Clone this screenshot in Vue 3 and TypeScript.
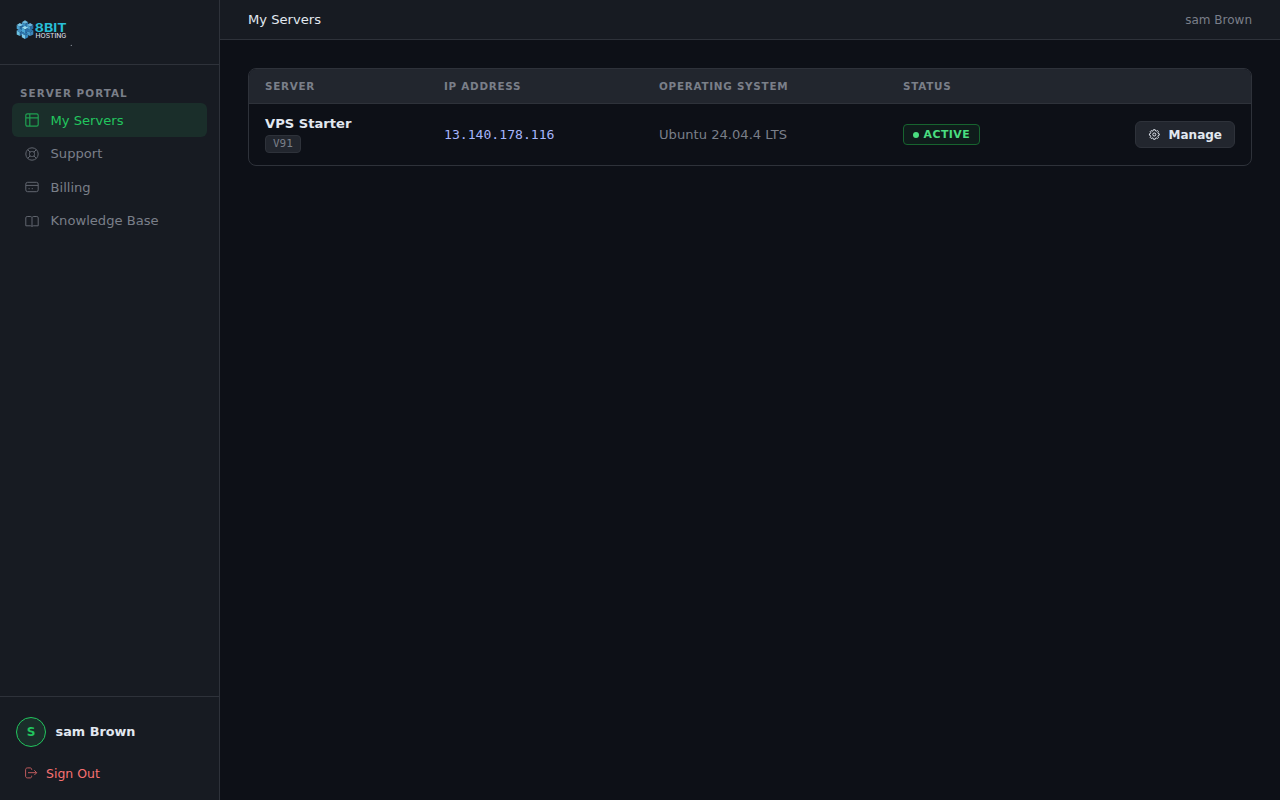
<script setup lang="ts">
import { ref } from 'vue'

interface NavItem { label: string; icon: string }
interface Server { name: string; tag: string; ip: string; os: string; status: string }
interface Cube { x: number; y: number; top: string; left: string; right: string }

const nav: NavItem[] = [
  { label: 'My Servers', icon: 'grid' },
  { label: 'Support', icon: 'ring' },
  { label: 'Billing', icon: 'card' },
  { label: 'Knowledge Base', icon: 'book' },
]
const active = ref('My Servers')
const user = 'sam Brown'
const servers: Server[] = [
  { name: 'VPS Starter', tag: 'V91', ip: '13.140.178.116', os: 'Ubuntu 24.04.4 LTS', status: 'ACTIVE' },
]
const cubes: Cube[] = [
  { x: 9, y: 4, top: '#6db9dc', left: '#3c8fc2', right: '#2b72a8' },
  { x: 3.9, y: 6.8, top: '#7cc8e8', left: '#4ba2d0', right: '#22639a' },
  { x: 14.1, y: 6.8, top: '#6ab4dc', left: '#4a9cca', right: '#2c70a6' },
  { x: 3.9, y: 12.4, top: '#3f8fc2', left: '#6cc4e4', right: '#2a6ca2' },
  { x: 14.1, y: 12.4, top: '#2f78ae', left: '#4a9ccc', right: '#3a86ba' },
  { x: 9, y: 15.2, top: '#2f78ae', left: '#7ccaea', right: '#3584b8' },
  { x: 9, y: 9.6, top: '#9adcf0', left: '#4aa6d4', right: '#2a6fa8' },
]
</script>

<template>
  <div class="layout">
    <aside class="sidebar">
      <div class="brand">
        <svg class="logo" width="60" height="36" viewBox="0 0 60 36">
          <g v-for="(c, i) in cubes" :key="i" :transform="`translate(${c.x} ${c.y})`">
            <path d="M0-3.700 3.200-1.800 0 0-3.200-1.800Z" :fill="c.top" />
            <path d="M-3.200-1.800 0 0V3.700L-3.200 2Z" :fill="c.left" />
            <path d="M3.200-1.800 0 0V3.700L3.200 2Z" :fill="c.right" />
          </g>
          <text x="18.800" y="11.600" class="logo-main" textLength="31.700" lengthAdjust="spacingAndGlyphs">8BIT</text>
          <text x="19.600" y="18.100" class="logo-sub" textLength="30.800" lengthAdjust="spacingAndGlyphs">HOSTING</text>
          <circle cx="55.300" cy="25.400" r=".6" fill="#8d949d" />
        </svg>
      </div>
      <nav class="nav">
        <div class="nav-title">SERVER PORTAL</div>
        <a v-for="n in nav" :key="n.label" class="nav-item" :class="{ active: active === n.label }" @click="active = n.label">
          <svg width="16" height="16" viewBox="0 0 16 16" fill="none" stroke="currentColor">
            <g v-if="n.icon === 'grid'" stroke-width="1.200">
              <rect x="1.800" y="1.800" width="12.400" height="12.400" rx="1.600" />
              <path d="M2 5.800h12M5.800 2v12" />
            </g>
            <g v-else-if="n.icon === 'ring'">
              <circle cx="8" cy="8" r="6.200" />
              <rect x="5.500" y="5.500" width="5" height="5" rx="2" />
              <path d="m3.700 3.700 2.300 2.300m4 4 2.300 2.300m0-8.600L10 6M6 10l-2.300 2.300" />
            </g>
            <g v-else-if="n.icon === 'card'">
              <rect x="1.800" y="3.300" width="12.400" height="9.400" rx="1.800" />
              <path d="M2 6.400h12M4.500 9.700h1.200M7.700 9.700h1.200" />
            </g>
            <path v-else d="M8 4.500C7.700 3.700 7 3.500 6.200 3.500H3.200c-.9 0-1.400.5-1.400 1.300v8h4.800c.7 0 1.200.1 1.400.7.200-.6.700-.7 1.400-.7h4.800v-8c0-.8-.5-1.300-1.400-1.300h-3c-.8 0-1.500.2-1.800 1Zm0 0v9" />
          </svg>
          <span>{{ n.label }}</span>
        </a>
      </nav>
      <div class="account">
        <div class="profile">
          <div class="avatar">S</div>
          <span>{{ user }}</span>
        </div>
        <a class="signout">
          <svg width="14" height="14" viewBox="0 0 14 14" fill="none" stroke="currentColor">
            <path d="M7.700 4V3.600C7.700 2.400 7 1.900 6 1.900H3.500C2.300 1.900 1.600 2.600 1.600 3.700v6.400c0 1.100.7 1.800 1.900 1.800H6c1 0 1.700-.5 1.700-1.700v-.5M4 6.700h8.700M10.300 4.300l2.400 2.400-2.400 2.400" />
          </svg>
          <span>Sign Out</span>
        </a>
      </div>
    </aside>
    <div class="main">
      <header class="topbar">
        <span class="title">My Servers</span>
        <span class="who">{{ user }}</span>
      </header>
      <main class="content">
        <div class="table">
          <div class="row head">
            <span>SERVER</span><span>IP ADDRESS</span><span>OPERATING SYSTEM</span><span>STATUS</span><span></span>
          </div>
          <div v-for="s in servers" :key="s.tag" class="row body">
            <div class="server">
              <strong>{{ s.name }}</strong>
              <span class="tag">{{ s.tag }}</span>
            </div>
            <span class="ip">{{ s.ip }}</span>
            <span class="os">{{ s.os }}</span>
            <div><span class="status"><i></i>{{ s.status }}</span></div>
            <button class="manage">
              <svg width="13" height="13" viewBox="0 0 14 14" fill="none" stroke="currentColor" stroke-width="1.100" stroke-linejoin="round">
                <circle cx="7" cy="7" r="1.700" />
                <path d="m6 1.700-.4 1.300-.9.300-1.200-.6-1 1 .6 1.200-.3.900L1.600 6.200v1.600l1.200.4.300.9-.6 1.200 1.100 1.100 1.200-.6.900.3.400 1.200h1.900l.4-1.200.9-.3 1.200.6 1.100-1.100-.6-1.200.3-.9 1.200-.4V6.200l-1.200-.4-.3-.9.600-1.200-1.100-1-1.200.6-.9-.3-.4-1.300Z" />
              </svg>
              Manage
            </button>
          </div>
        </div>
      </main>
    </div>
  </div>
</template>

<style>
body { background: #0d1017; }
</style>

<style scoped>
* { box-sizing: border-box; }
.layout { display: flex; height: 100vh; background: #0d1017; color: #e2e8f0; font: 13.12px/20px "DejaVu Sans", sans-serif; }
.sidebar { width: 220px; flex: none; display: flex; flex-direction: column; background: #171b22; border-right: 1px solid #2e323a; }
.brand { height: 65px; padding: 20px 16px 0; border-bottom: 1px solid #2e323a; }
.logo { display: block; }
.logo-main { font: bold 11.5px Inter, sans-serif; fill: #28bfd8; }
.logo-sub { font: 500 5.6px Inter, sans-serif; fill: #d5dae0; }
.nav { flex: 1; padding: 20px 12px 0; }
.nav-title { height: 18px; padding-left: 8px; font-size: 10.4px; line-height: 17px; font-weight: bold; letter-spacing: 1.04px; color: #7a7f89; }
.nav-item { display: flex; align-items: center; height: 33.5px; padding: 1px 0 0 12px; gap: 10.5px; border-radius: 6px; color: #7a7f89; cursor: pointer; }
.nav-item svg { opacity: .75; }
.nav-item span { padding-top: 1px; }
.nav-item.active { background: #1a2e2a; color: #22c55e; }
.account { height: 104px; padding: 20px 16px 0; border-top: 1px solid #2e323a; }
.profile { display: flex; align-items: center; gap: 9.6px; font-size: 12.8px; font-weight: bold; }
.avatar { width: 30px; height: 30px; display: grid; place-items: center; border: 1px solid #22c55e; border-radius: 50%; background: #1a2e2a; color: #22c55e; font-size: 12px; }
.signout { display: flex; align-items: center; gap: 8px; margin-top: 16.5px; padding-left: 8px; color: #f87171; font-size: 12.48px; }
.signout svg { opacity: .75; margin-top: -1px; }
.main { flex: 1; min-width: 0; }
.topbar { height: 40px; display: flex; align-items: center; justify-content: space-between; padding: 0 28px; background: #171b22; border-bottom: 1px solid #2e323a; }
.who { font-size: 12px; color: #7a7f89; }
.content { padding: 28px; }
.table { border: 1px solid #2e323a; border-radius: 8px; overflow: hidden; }
.row { display: grid; grid-template-columns: 179px 215px 244px 1fr auto; align-items: center; padding: 0 16px; }
.head { height: 35px; background: #22262e; border-bottom: 1px solid #2e323a; color: #7a7f89; font-size: 10.4px; font-weight: bold; letter-spacing: .73px; }
.body { height: 61px; }
.server { display: flex; flex-direction: column; align-items: flex-start; padding-bottom: 1px; }
.server strong { line-height: 17px; }
.tag { margin-top: 3px; height: 18px; padding: 0 7px; border: 1px solid #2e323a; border-radius: 4px; background: #22262e; color: #7a7f89; font: 11px/16px "DejaVu Sans Mono", monospace; }
.ip { font-family: "DejaVu Sans Mono", monospace; color: #a5b4fc; }
.os { color: #7a7f89; }
.status { display: inline-flex; align-items: center; gap: 4.6px; height: 21px; padding: 0 9px; border: 1px solid #17642f; border-radius: 4px; background: #0f1c1b; color: #4ade80; font-size: 10.88px; font-weight: bold; letter-spacing: .46px; vertical-align: middle; }
.status i { width: 6px; height: 6px; border-radius: 50%; background: currentColor; }
.manage { display: flex; align-items: center; gap: 8px; width: 100px; height: 27px; padding: 0 12px; border: 1px solid #2e323a; border-radius: 6px; background: #22262e; color: #e2e8f0; font: bold 12px "DejaVu Sans", sans-serif; }
</style>
